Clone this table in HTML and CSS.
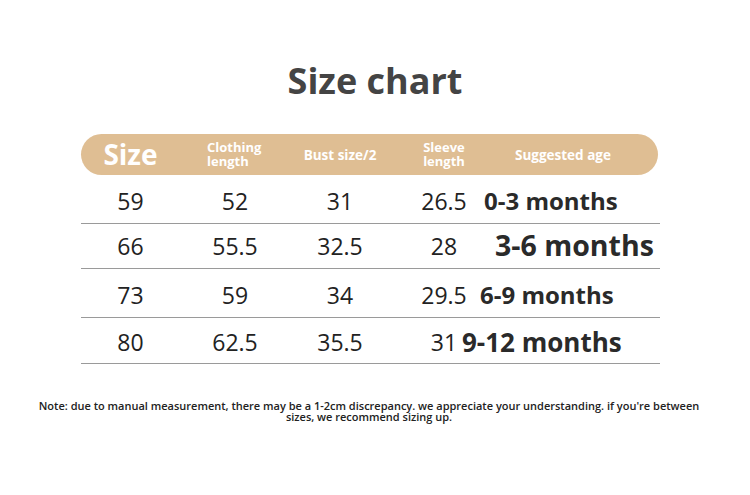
FILE: index.html
```html
<!DOCTYPE html>
<html lang="en">
<head>
<meta charset="utf-8">
<title>Size chart</title>
<link rel="stylesheet" href="styles.css">
</head>
<body>
<main class="page">
  <h1 class="title">Size chart</h1>
  <section class="chart">
    <div class="head">
      <div class="cell h-size">Size</div>
      <div class="cell h-small">Clothing<br>length</div>
      <div class="cell h-one">Bust size/2</div>
      <div class="cell h-small h-center">Sleeve<br>length</div>
      <div class="cell h-one h-age">Suggested age</div>
    </div>
    <div class="row r1">
      <div class="cell num">59</div>
      <div class="cell num">52</div>
      <div class="cell num">31</div>
      <div class="cell num">26.5</div>
      <div class="cell age">0-3 months</div>
    </div>
    <div class="row r2">
      <div class="cell num">66</div>
      <div class="cell num">55.5</div>
      <div class="cell num">32.5</div>
      <div class="cell num">28</div>
      <div class="cell age">3-6 months</div>
    </div>
    <div class="row r3">
      <div class="cell num">73</div>
      <div class="cell num">59</div>
      <div class="cell num">34</div>
      <div class="cell num">29.5</div>
      <div class="cell age">6-9 months</div>
    </div>
    <div class="row r4">
      <div class="cell num">80</div>
      <div class="cell num">62.5</div>
      <div class="cell num">35.5</div>
      <div class="cell num">31</div>
      <div class="cell age">9-12 months</div>
    </div>
  </section>
  <p class="note">Note: due to manual measurement, there may be a 1-2cm discrepancy. we appreciate your understanding. if you're between sizes, we recommend sizing up.</p>
</main>
</body>
</html>
```
FILE: styles.css
```css
* { box-sizing: border-box; }
html, body { margin: 0; padding: 0; background: #ffffff; }
body {
  font-family: "Open Sans", "Noto Sans", "DejaVu Sans", sans-serif;
  color: #222222;
}
.page {
  width: 750px;
  height: 495px;
  padding-top: 57px;
}
.title {
  margin: 0;
  text-align: center;
  font-size: 36px;
  line-height: 48px;
  font-weight: 700;
  color: #444444;
}
.chart {
  margin: 29px 0 0 81px;
  width: 579px;
}
.head, .row {
  display: grid;
  grid-template-columns: 99px 110px 100px 108px 1fr;
  align-items: center;
}
.head {
  width: 577px;
  height: 41px;
  border-radius: 21px;
  background: #dfbe93;
  color: #ffffff;
  font-weight: 700;
}
.cell { text-align: center; white-space: nowrap; }
.h-size { font-size: 28px; line-height: 34px; padding-bottom: 2px; }
.h-small { font-size: 13px; line-height: 14px; text-align: left; padding-left: 27px; padding-bottom: 2px; }
.h-center { text-align: center; padding-left: 0; }
.h-one { font-size: 13.5px; line-height: 18px; }
.h-age { text-align: left; padding-left: 17px; }
.row {
  border-bottom: 1px solid #9a9a9a;
}
.r1 { height: 49px; padding-top: 4px; }
.r2 { height: 45px; }
.r3 { height: 49px; padding-top: 4px; }
.r4 { height: 46px; padding-top: 2px; }
.num { font-size: 23px; line-height: 30px; color: #222222; }
.age {
  text-align: left;
  font-weight: 700;
  font-size: 24px;
  line-height: 30px;
  color: #2a2a2a;
}
.r1 .age { margin-left: -14px; }
.r2 .age { margin-left: -3px; font-size: 28.5px; padding-bottom: 2px; }
.r3 .age { margin-left: -18px; }
.r4 .age { margin-left: -36px; font-size: 26px; }
.note {
  width: 680px;
  margin: 36px 0 0 29px;
  text-align: center;
  font-size: 11px;
  line-height: 11px;
  font-weight: 600;
  color: #222222;
}
```
